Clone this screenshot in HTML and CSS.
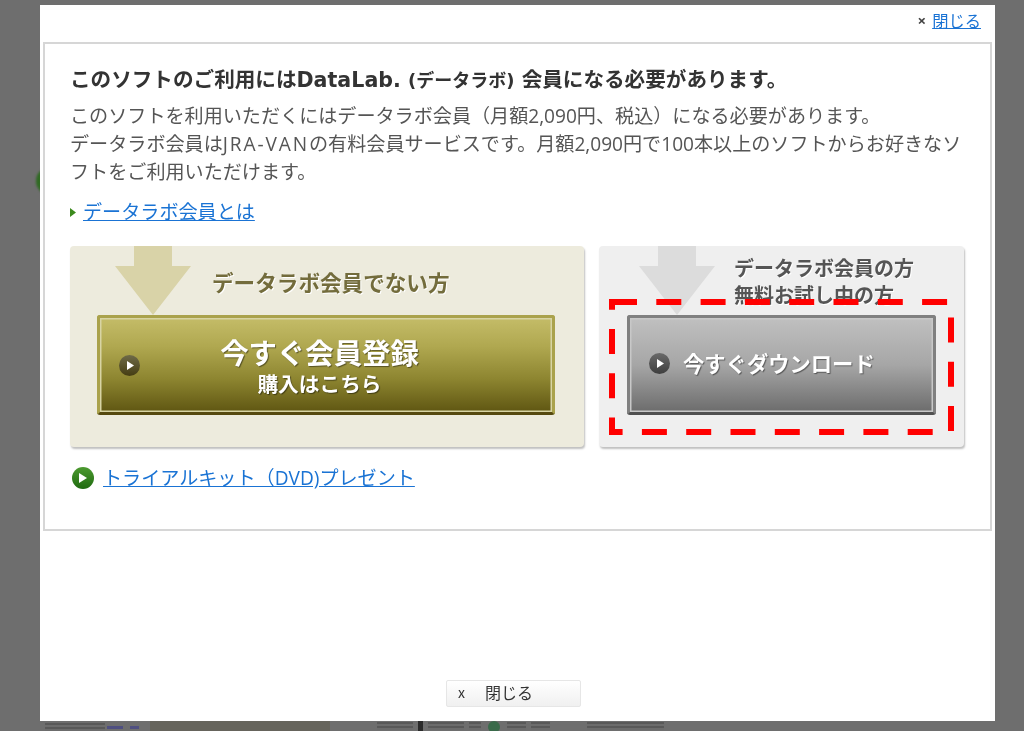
FILE: index.html
```html
<!DOCTYPE html>
<html lang="ja">
<head>
    <meta charset="UTF-8">
    <title>DataLab. 会員のご案内</title>
    <link rel="stylesheet" href="styles.css">
</head>
<body>
    <!-- ページ本体（モーダルの後ろ） -->
    <span class="behind-dot"></span>
    <div class="behind-strip">
        <div class="behind-left">
            <span class="behind-line behind-w60"></span>
            <span class="behind-blue behind-w16"></span>
            <span class="behind-blue behind-w9"></span>
        </div>
        <div class="behind-olive"></div>
        <div class="behind-right">
            <span class="behind-line behind-w36"></span>
            <span class="behind-bar"></span>
            <span class="behind-line behind-w36"></span>
            <span class="behind-line behind-w12"></span>
            <span class="behind-tree"></span>
            <span class="behind-line behind-w19"></span>
            <span class="behind-line behind-w19"></span>
            <span class="behind-line behind-w77"></span>
        </div>
    </div>

    <div class="modal">
        <div class="modal-top">
            <span class="close-x">×</span>
            <a class="link" href="#">閉じる</a>
        </div>

        <div class="panel">
            <h1 class="title">このソフトのご利用にはDataLab. <span class="title-small">(データラボ)</span> 会員になる必要があります。</h1>
            <p class="lead">このソフトを利用いただくにはデータラボ会員（月額2,090円、税込）になる必要があります。<br>データラボ会員は<span class="wide">JRA-VAN</span>の有料会員サービスです。月額2,090円で100本以上のソフトからお好きなソ<br>フトをご利用いただけます。</p>

            <p class="about">
                <svg class="about-arrow" width="6" height="9" viewBox="0 0 6 9"><path d="M0 0 6 4.5 0 9z" fill="#3c8a1e"/></svg>
                <a class="link" href="#">データラボ会員とは</a>
            </p>

            <div class="cards">
                <div class="card card-olive">
                    <svg class="card-arrow" width="76" height="69" viewBox="0 0 76 69"><path d="M19 0H57V20H76L38 69 0 20H19z" fill="#d9d3a8"/></svg>
                    <div class="card-head card-head-olive">データラボ会員でない方</div>
                    <a class="big-btn btn-olive" href="#">
                        <span class="play play-olive"><svg width="8" height="9" viewBox="0 0 8 9"><path d="M1 0 8 4.5 1 9z" fill="#fff"/></svg></span>
                        <span class="btn-text">
                            <span class="btn-main">今すぐ会員登録</span>
                            <span class="btn-sub">購入はこちら</span>
                        </span>
                    </a>
                </div>

                <div class="card card-gray">
                    <svg class="card-arrow card-arrow-gray" width="76" height="69" viewBox="0 0 76 69"><path d="M19 0H57V20H76L38 69 0 20H19z" fill="#dcdcdc"/></svg>
                    <div class="card-head card-head-gray">データラボ会員の方<br>無料お試し中の方</div>
                    <a class="big-btn btn-gray" href="#">
                        <span class="play play-gray"><svg width="8" height="9" viewBox="0 0 8 9"><path d="M1 0 8 4.5 1 9z" fill="#fff"/></svg></span>
                        <span class="btn-down">今すぐダウンロード</span>
                    </a>
                    <svg class="dash-mark" width="350" height="142" viewBox="0 0 350 142"><rect x="3" y="3" width="339" height="130" fill="none" stroke="#f00" stroke-width="6" stroke-dasharray="25 19.3"/></svg>
                </div>
            </div>

            <p class="trial">
                <span class="trial-icon"><svg width="8" height="10" viewBox="0 0 8 10"><path d="M0 0 8 5 0 10z" fill="#fff"/></svg></span>
                <a class="link" href="#">トライアルキット（DVD)プレゼント</a>
            </p>
        </div>

        <div class="modal-bottom">
            <button class="close-btn"><span class="close-btn-x">x</span>閉じる</button>
        </div>
    </div>
</body>
</html>
```

FILE: styles.css
```css
html, body {
    height: 100%;
}

body {
    margin: 0;
    background-color: #6e6e6e;
    font-family: "Open Sans", "Noto Sans CJK JP", sans-serif;
    color: #444;
    overflow: hidden;
    position: relative;
}

/* モーダルの後ろに透けて見える部分 */
.behind-dot {
    position: absolute;
    top: 168px;
    left: 36px;
    width: 24px;
    height: 26px;
    border-radius: 50%;
    background-color: #2f6a22;
    filter: blur(1px);
}

.behind-strip {
    position: absolute;
    left: 45px;
    right: 0;
    top: 721px;
    height: 10px;
    display: flex;
    filter: blur(0.6px);
}

.behind-left {
    width: 105px;
    display: flex;
    gap: 2px;
    align-items: flex-end;
}

.behind-line {
    display: inline-block;
    height: 8px;
    background: repeating-linear-gradient(#595959 0 2px, #6c6c6c 2px 4px);
}

.behind-blue {
    display: inline-block;
    height: 3px;
    margin: 0 5px 2px 0;
    background-color: #4f4f80;
}

.behind-w60 { width: 60px; }
.behind-w16 { width: 16px; }
.behind-w9 { width: 9px; }
.behind-w36 { width: 36px; }
.behind-w12 { width: 12px; }
.behind-w19 { width: 19px; }
.behind-w77 { width: 77px; margin-left: 32px; }

.behind-olive {
    width: 180px;
    background-color: #66645c;
}

.behind-right {
    margin-left: 47px;
    display: flex;
    gap: 5px;
    align-items: center;
}

.behind-bar {
    width: 5px;
    height: 10px;
    background-color: #2a2a2a;
}

.behind-tree {
    width: 12px;
    height: 12px;
    margin: 2px 2px 0;
    border-radius: 50%;
    background-color: #3a6a4a;
}

/* モーダル */
.modal {
    position: absolute;
    top: 5px;
    left: 40px;
    width: 955px;
    height: 716px;
    background-color: #fff;
    display: flex;
    flex-direction: column;
    filter: blur(0.4px);
}

.modal-top {
    height: 37px;
    box-sizing: border-box;
    padding: 0 14px 7px 0;
    display: flex;
    justify-content: flex-end;
    align-items: center;
    gap: 6px;
    font-size: 16.3px;
}

.close-x {
    font-size: 15px;
    font-weight: bold;
    color: #444;
}

.link {
    color: #1a73d4;
    text-decoration: underline;
}

.panel {
    margin: 0 3px;
    height: 489px;
    box-sizing: border-box;
    border: 2px solid #d6d6d6;
    padding: 20px 25px 0;
}

.title {
    margin: 0;
    font-family: "DejaVu Sans", "Noto Sans CJK JP", sans-serif;
    font-size: 20.6px;
    line-height: 32px;
    font-weight: bold;
    color: #333;
    white-space: nowrap;
}

.title-small {
    font-size: 18px;
}

.lead {
    margin: 5px 0 0;
    font-size: 19.1px;
    line-height: 28px;
    color: #555;
}

.wide {
    letter-spacing: 1.9px;
}

.about {
    margin: 12px 0 0;
    font-size: 19.1px;
    line-height: 28px;
    display: flex;
    align-items: center;
    gap: 7px;
}

.cards {
    display: flex;
    gap: 15px;
    margin-top: 20px;
}

.card {
    position: relative;
    height: 201px;
    box-sizing: border-box;
    border-radius: 4px;
    box-shadow: 1px 2px 2px rgba(0, 0, 0, 0.25);
}

.card-olive {
    width: 514px;
    background-color: #edebdd;
    padding: 69px 0 0 27px;
}

.card-gray {
    width: 365px;
    background-color: #efefef;
    padding: 69px 0 0 28px;
}

.card-arrow {
    position: absolute;
    top: 0;
    left: 45px;
}

.card-arrow-gray {
    left: 40px;
}

.card-head {
    position: absolute;
    font-weight: bold;
    text-shadow: 1px 1px 0 #fff;
}

.card-head-olive {
    top: 20px;
    left: 142px;
    font-size: 21.6px;
    color: #736c3c;
}

.card-head-gray {
    top: 9px;
    left: 135px;
    font-size: 20px;
    color: #555;
    line-height: 27px;
}

.big-btn {
    position: relative;
    display: flex;
    align-items: center;
    height: 100px;
    box-sizing: border-box;
    border-radius: 3px;
    text-decoration: none;
    color: #fff;
    font-weight: bold;
}

.btn-olive {
    width: 458px;
    border: 3px solid #aaa24c;
    border-bottom-color: #55490f;
    background: linear-gradient(#c4bc68, #b0a850 30%, #8d8530 65%, #5f5612);
    box-shadow: inset 0 0 0 1.5px #d8d4a4;
}

.btn-gray {
    width: 309px;
    border: 3px solid #808080;
    border-bottom-color: #505050;
    padding-bottom: 4px;
    background: linear-gradient(#c0c0c0, #a6a6a6 50%, #6c6c6c);
    box-shadow: inset 0 0 0 1.5px #c8c8c8;
}

.play {
    flex: none;
    display: flex;
    align-items: center;
    justify-content: center;
    border-radius: 50%;
    width: 21px;
    height: 21px;
}

.play-olive {
    margin-left: 19px;
    background: linear-gradient(#6e6a48, #453d12);
}

.play-gray {
    margin-left: 19px;
    background: linear-gradient(#6a6a6a, #3e3e3e);
}

.btn-text {
    flex: 1;
    display: flex;
    flex-direction: column;
    align-items: center;
    margin-top: 4px;
    padding-right: 53px;
    text-shadow: 1px 1px 1px rgba(0, 0, 0, 0.45);
}

.btn-main {
    font-size: 28.4px;
    line-height: 34px;
}

.btn-sub {
    font-size: 20.7px;
    line-height: 28px;
}

.btn-down {
    margin: 0 0 2px 13px;
    font-size: 21.3px;
    text-shadow: 1px 1px 1px rgba(0, 0, 0, 0.45);
    white-space: nowrap;
}

/* 赤い点線の囲み */
.dash-mark {
    position: absolute;
    top: 53px;
    left: 10px;
}

.trial {
    margin: 16px 0 0 2px;
    font-size: 19.1px;
    line-height: 30px;
    display: flex;
    align-items: center;
    gap: 9px;
}

.trial-icon {
    width: 22px;
    height: 22px;
    border-radius: 50%;
    background: linear-gradient(#4c9a30, #1f6a10);
    display: flex;
    align-items: center;
    justify-content: center;
}

.modal-bottom {
    flex: 1;
    display: flex;
    justify-content: center;
    padding-top: 149px;
}

.close-btn {
    width: 135px;
    height: 27px;
    margin-right: 8px;
    padding: 0 0 3px 11px;
    display: flex;
    align-items: center;
    font-family: "Noto Sans CJK JP", sans-serif;
    font-size: 16px;
    color: #333;
    border: 1px solid #e6e6e6;
    border-radius: 2px;
    background: linear-gradient(#fff, #f0f0f0);
}

.close-btn-x {
    margin-right: 20px;
    font-size: 14px;
}
```
